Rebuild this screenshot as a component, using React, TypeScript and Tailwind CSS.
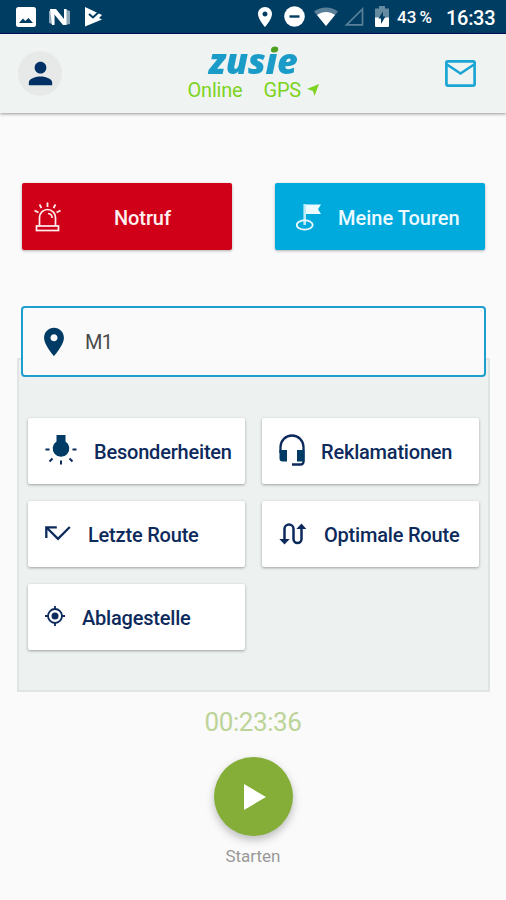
import type { ReactNode } from 'react'

const PIN = 'M12 2C8.13 2 5 5.13 5 9c0 5.25 7 13 7 13s7-7.75 7-13c0-3.87-3.13-7-7-7zm0 9.5c-1.38 0-2.5-1.12-2.5-2.5s1.12-2.5 2.5-2.5 2.5 1.12 2.5 2.5-1.12 2.5-2.5 2.5z'

function StatusBar() {
  return (
    <div className="flex h-[34px] shrink-0 items-center border-b border-[#000a5c] bg-[#003d62] pr-[11px] pl-4 text-white">
      <svg className="h-5 w-5" viewBox="0 0 20 20" fill="currentColor">
        <path fillRule="evenodd" d="M2.500 0h15A2.500 2.500 0 0 1 20 2.500v15a2.500 2.500 0 0 1-2.500 2.500h-15A2.500 2.500 0 0 1 0 17.500v-15A2.500 2.500 0 0 1 2.500 0zM3 16h14l-4.500-5-3.200 3L7 11.500z" />
      </svg>
      <svg className="ml-[13px] h-[18px] w-[21px]" viewBox="0 0 21 18" fill="currentColor">
        <path opacity=".55" d="M0 3l6-1v15l-6-2zM15 1l6 2v13l-6 1z" />
        <path d="M1 1h6l8 10V1h2.500v16H14L5 6v11H3z" />
      </svg>
      <svg className="ml-[14px] h-5 w-[19px]" viewBox="0 0 19 20">
        <path d="M1 0l17 8-3 3 3 1.500L1 19.500z" fill="white" />
        <path d="M5 7l4 3.500L17 3" fill="none" stroke="#003d62" strokeWidth="2" />
      </svg>
      <svg className="ml-auto h-6 w-6" viewBox="0 0 24 24" fill="currentColor">
        <path d={PIN} />
      </svg>
      <svg className="ml-[7px] h-[21px] w-[21px]" viewBox="0 0 21 21">
        <circle cx="10.500" cy="10.500" r="10.300" fill="white" />
        <path d="M5.500 10.500h10" stroke="#003d62" strokeWidth="2.400" />
      </svg>
      <svg className="ml-[9px] h-[19px] w-6" viewBox="0 0 24 19" fill="currentColor">
        <path opacity=".35" d="M0 4.500C7-1 17-1 24 4.500L12 19z" />
        <path d="M3 8c5.500-4 12.500-4 18 0l-9 11z" />
      </svg>
      <svg className="ml-1.5 h-[19px] w-5" viewBox="0 0 20 19" fill="none">
        <path d="M2.500 17.800H18.500V2z" stroke="white" strokeOpacity=".35" strokeWidth="1.700" />
      </svg>
      <svg className="ml-[11px] h-[21px] w-[14px]" viewBox="0 0 14 21">
        <path opacity=".4" fill="white" d="M4 0h6v2.500h4V12H0V2.500h4z" />
        <path fill="white" d="M0 11.500h14V20a1 1 0 0 1-1 1H1a1 1 0 0 1-1-1z" />
        <path fill="#003d62" d="M8 5.500L3.500 12.500H6V18l4.500-7.500H8z" />
      </svg>
      <span className="ml-[8px] w-[49px] pt-0.5 text-[17px] font-medium whitespace-nowrap [word-spacing:-1px]">43 %</span>
      <span className="w-[49px] pt-0.5 text-[20px] font-medium tracking-[-0.3px]">16:33</span>
    </div>
  )
}

function Header() {
  return (
    <header className="z-10 flex h-[79px] shrink-0 items-start justify-between bg-[#eff4f3] pr-[30px] pl-[18px] shadow-[0_1px_3px_rgba(0,0,0,0.4)]">
      <div className="mt-[17px] flex h-11 w-[69px] items-center">
        <div className="flex h-[45px] w-11 items-center justify-center rounded-full bg-[#e7e9e9]">
          <svg className="h-[35px] w-[35px] text-[#003064]" viewBox="0 0 24 24" fill="currentColor">
            <path d="M12 12c2.210 0 4-1.790 4-4s-1.790-4-4-4-4 1.790-4 4 1.790 4 4 4zm0 2c-2.670 0-8 1.340-8 4v2h16v-2c0-2.660-5.330-4-8-4z" />
          </svg>
        </div>
      </div>
      <div className="flex flex-col items-center">
        <div className="mt-[7px] h-[37px] bg-linear-to-b from-[#4f9f20] from-[12px] to-[#1a9bc8] to-[12px] bg-clip-text px-1 font-['Open_Sans',sans-serif] text-[36px] leading-[39px] font-extrabold tracking-[-0.3px] text-transparent italic">
          zusie
        </div>
        <div className="flex h-6 items-center text-[20px] leading-6 tracking-[-0.2px] text-[#7ed321]">
          <span className="w-[76px]">Online</span>
          <span className="w-[43px]">GPS</span>
          <svg className="h-3 w-3" viewBox="0 0 12 12" fill="currentColor">
            <path d="M12 0L7.500 12 6 7 0 5z" />
          </svg>
        </div>
      </div>
      <div className="mt-[26px] flex w-[57px] justify-end">
        <svg className="h-[27px] w-[31px]" viewBox="0 0 31 27" fill="none" stroke="#1ba5d5" strokeWidth="2.700">
          <rect x="1.400" y="1.400" width="28.200" height="24.200" rx="1.500" />
          <path d="M2 4.500l13.500 9 13.500-9" />
        </svg>
      </div>
    </header>
  )
}

function Tile({ icon, label, className }: { icon: ReactNode; label: string; className: string }) {
  return (
    <button type="button" className={`flex h-[66px] items-center rounded-[2px] bg-white pl-[17px] text-[20px] font-medium tracking-[-0.2px] whitespace-nowrap text-[#0d2a5c] shadow-[0_1px_3px_rgba(0,0,0,0.35)] ${className}`}>
      {icon}
      <span className="pt-px">{label}</span>
    </button>
  )
}

export default function App() {
  return (
    <div className="flex h-[900px] w-[506px] flex-col overflow-hidden bg-[#fafafa] font-[Roboto,sans-serif]">
      <StatusBar />
      <Header />

      <div className="mt-[70px] grid grid-cols-2 gap-[43px] pr-[21px] pl-[22px]">
        <button type="button" className="flex h-[67px] items-center rounded-[2px] bg-[#d00019] pl-3 text-[20px] font-medium tracking-[-0.1px] text-[#fff0f0] shadow-[0_1px_3px_rgba(0,0,0,0.3)]">
          <svg className="h-[30px] w-[27px]" viewBox="0 0 27 30" fill="none" stroke="currentColor" strokeWidth="1.700">
            <path d="M5.500 24v-8.500a8 8 0 0 1 16 0V24M14 11.500c2.500.3 4 2 4.200 4.500" />
            <rect x="2.500" y="24" width="22" height="4.500" />
            <path d="M13.500.5V5M5.500 2.500l2 3.500M21.500 2.500l-2 3.500M.5 8.500l4 2M26.500 8.500l-4 2" strokeWidth="1.800" />
          </svg>
          <span className="ml-[53px] pt-0.5">Notruf</span>
        </button>
        <button type="button" className="flex h-[67px] items-center rounded-[2px] bg-[#00aadd] pl-[21px] text-[20px] font-medium text-[#edfaff] shadow-[0_1px_3px_rgba(0,0,0,0.3)]">
          <svg className="mt-0.5 h-[27px] w-[25px]" viewBox="0 0 25 27" fill="none" stroke="currentColor">
            <ellipse cx="8.700" cy="21" rx="8" ry="4.600" strokeWidth="1.800" />
            <path d="M8.700 0v21" strokeWidth="2.600" opacity=".8" />
            <path d="M10 .5h15l-3 4.800 3 4.700H10z" fill="currentColor" stroke="none" />
          </svg>
          <span className="ml-[17px] pt-0.5">Meine Touren</span>
        </button>
      </div>

      <div className="z-10 mr-5 ml-[21px] mt-14 flex h-[71px] shrink-0 items-center rounded-[4px] border-[2.500px] border-[#1c9fcf] bg-[#fafafa] pl-[14px]">
        <svg className="h-[34px] w-[34px] text-[#003b66]" viewBox="0 0 24 24" fill="currentColor">
          <path d={PIN} />
        </svg>
        <span className="ml-[14px] pt-px text-[20px] tracking-[-0.6px] text-[#4a4a4a]">M1</span>
      </div>

      <div className="mr-4 ml-[17px] -mt-[19px] grid h-[334px] shrink-0 grid-cols-[217px_217px] content-start gap-x-[17px] gap-y-[17px] border-2 border-[#e0e4e3] bg-[#edf2f1] pt-[58px] pl-[9px]">
        <Tile
          label="Besonderheiten"
          className="gap-[17px]"
          icon={
            <svg className="-mt-0.5 h-[30px] w-8" viewBox="0 0 32 30" fill="none" stroke="currentColor" strokeWidth="2">
              <path d="M11.500 0h9v6.500a8.300 8.300 0 1 1-9 0z" fill="#003b66" stroke="none" />
              <path d="M.5 14.500h4M27.500 14.500h4M4.500 26.500l3-3M27.500 26.500l-3-3M16 25.500v4" />
            </svg>
          }
        />
        <Tile
          label="Reklamationen"
          className="gap-4"
          icon={
            <svg className="-mt-0.5 h-8 w-[26px]" viewBox="0 0 26 32" fill="none" stroke="currentColor" strokeWidth="2.300">
              <path d="M1.500 19v-6a11.500 11.500 0 0 1 23 0v14.500q0 3-3 3H13" />
              <path d="M.5 16H8v11.500H3.500a3 3 0 0 1-3-3zM18 16h7.500v11.500H18z" fill="#003b66" stroke="none" />
            </svg>
          }
        />
        <Tile
          label="Letzte Route"
          className="gap-[17px]"
          icon={
            <svg className="-mt-0.5 h-[15px] w-[26px]" viewBox="0 0 26 15" fill="none" stroke="currentColor" strokeWidth="2.300">
              <path d="M1.300 12V1.300h10.500M1.500 1.500l11.500 11.300L24.800 1" />
            </svg>
          }
        />
        <Tile
          label="Optimale Route"
          className="gap-[17px]"
          icon={
            <svg className="h-[22px] w-7" viewBox="0 0 28 22" fill="none" stroke="currentColor" strokeWidth="2.500">
              <path d="M5.500 18V6a4.500 4.500 0 0 1 9 0v10a4 4 0 0 0 8 0V4" />
              <path d="M.3 16h10.400L5.500 21.500zM17.300 6h10L22.500.5z" fill="currentColor" stroke="none" />
            </svg>
          }
        />
        <Tile
          label="Ablagestelle"
          className="gap-[17px]"
          icon={
            <svg className="-mt-0.5 h-5 w-5" viewBox="0 0 20 20" fill="none" stroke="currentColor" strokeWidth="1.800">
              <circle cx="10" cy="10" r="7" />
              <circle cx="10" cy="10" r="3.500" fill="currentColor" stroke="none" />
              <path d="M10 0v3M10 17v3M0 10h3M17 10h3" />
            </svg>
          }
        />
      </div>

      <div className="flex flex-col items-center">
        <div className="mt-[12px] text-[26px] leading-9 tracking-[-0.4px] text-[#bdd498]">00:23:36</div>
        <button type="button" aria-label="Starten" className="mt-[17px] flex h-[79px] w-[79px] items-center justify-center rounded-full bg-[#84ae37] shadow-[0_4px_8px_rgba(0,0,0,0.25)]">
          <svg className="ml-[3px] h-[26px] w-[22px]" viewBox="0 0 22 26" fill="white">
            <path d="M0 0l22 13L0 26z" />
          </svg>
        </button>
        <div className="mt-[8px] text-[17px] leading-6 text-[#999]">Starten</div>
      </div>
    </div>
  )
}
